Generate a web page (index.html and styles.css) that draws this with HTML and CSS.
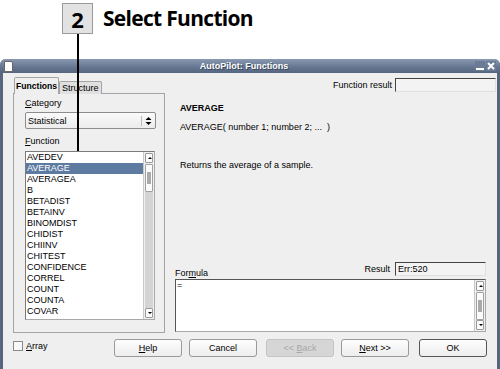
FILE: index.html
```html
<!DOCTYPE html>
<html lang="en">
<head>
  <meta charset="UTF-8">
  <title>AutoPilot: Functions</title>
  <link rel="stylesheet" href="styles.css">
</head>
<body>
  <div class="caption">
    <span class="step">2</span>
    <span class="caption-title">Select Function</span>
  </div>
  <div class="pointer"></div>

  <div class="window">
    <div class="titlebar">
      <span class="win-icon"></span>
      <span class="win-title">AutoPilot: Functions</span>
      <span class="win-buttons">
        <span class="win-btn"><span class="min-bar"></span></span>
        <span class="win-btn close">
          <svg width="10" height="10" viewBox="0 0 10 10"><path d="M2 2 L8 8 M8 2 L2 8" stroke="#fff" stroke-width="2"/></svg>
        </span>
      </span>
    </div>

    <div class="client">
      <div class="main">
        <div class="left">
          <div class="tabs">
            <span class="tab active">Functions</span>
            <span class="tab">Structure</span>
          </div>
          <div class="tab-panel">
            <div class="label"><u>C</u>ategory</div>
            <div class="select">
              <span>Statistical</span>
              <span class="spin">
                <svg width="7" height="10" viewBox="0 0 7 10"><path d="M3.5 1 L6.5 4 L0.5 4 Z M3.5 9 L6.5 6 L0.5 6 Z" fill="#000"/></svg>
              </span>
            </div>
            <div class="label fn-label"><u>F</u>unction</div>
            <div class="listbox">
              <ul class="items">
                <li>AVEDEV</li>
                <li class="selected">AVERAGE</li>
                <li>AVERAGEA</li>
                <li>B</li>
                <li>BETADIST</li>
                <li>BETAINV</li>
                <li>BINOMDIST</li>
                <li>CHIDIST</li>
                <li>CHIINV</li>
                <li>CHITEST</li>
                <li>CONFIDENCE</li>
                <li>CORREL</li>
                <li>COUNT</li>
                <li>COUNTA</li>
                <li>COVAR</li>
                <li>CRITBINOM</li>
              </ul>
              <div class="scrollbar">
                <span class="arrow up"></span>
                <span class="thumb"><span class="grip"></span></span>
                <span class="trough"></span>
                <span class="arrow down"></span>
              </div>
            </div>
          </div>
        </div>

        <div class="right">
          <div class="fn-result">
            <span>Function result</span>
            <span class="field wide"></span>
          </div>
          <div class="desc">
            <div class="desc-name">AVERAGE</div>
            <div class="desc-syntax">AVERAGE( number 1; number 2; ...&nbsp; )</div>
            <div class="desc-text">Returns the average of a sample.</div>
          </div>
          <div class="formula-head">
            <span>For<u>m</u>ula</span>
            <span class="result">
              <span>Result</span>
              <span class="field">Err:520</span>
            </span>
          </div>
          <div class="formula">
            <div class="formula-text">=</div>
            <div class="scrollbar small">
              <span class="arrow up"></span>
              <span class="thumb"><span class="grip"></span></span>
              <span class="trough"></span>
              <span class="arrow down"></span>
            </div>
          </div>
        </div>
      </div>

      <div class="footer">
        <label class="check"><span class="box"></span><span><u>A</u>rray</span></label>
        <div class="buttons">
          <span class="button"><u>H</u>elp</span>
          <span class="button">Cancel</span>
          <span class="button disabled">&lt;&lt; <u>B</u>ack</span>
          <span class="button"><u>N</u>ext &gt;&gt;</span>
          <span class="button default">OK</span>
        </div>
      </div>
    </div>
  </div>
</body>
</html>
```

FILE: styles.css
```css
body {
  margin: 0;
  width: 500px;
  height: 369px;
  background-color: white;
  font-family: "Liberation Sans", Arial, sans-serif;
  font-size: 9px;
  color: #000;
  position: relative;
  overflow: hidden;
}

u {
  text-decoration: underline;
  text-underline-offset: 1px;
}

/* caption above the screenshot */
.caption {
  height: 59px;
  display: flex;
  align-items: flex-start;
  padding-left: 62px;
  box-sizing: border-box;
  padding-top: 3px;
}

.step {
  width: 29px;
  height: 29px;
  border: 1px solid #9a9a9a;
  background-color: #e2e2e2;
  display: flex;
  align-items: center;
  justify-content: center;
  font-family: "Open Sans", sans-serif;
  font-weight: bold;
  font-size: 22px;
}

.caption-title {
  margin-left: 10px;
  margin-top: 1px;
  font-family: "Open Sans", sans-serif;
  font-weight: bold;
  font-size: 21px;
  line-height: 29px;
  letter-spacing: -0.7px;
}

.pointer {
  position: absolute;
  left: 77px;
  top: 34px;
  width: 2px;
  height: 117px;
  background-color: #000;
  z-index: 5;
}

/* window frame */
.window {
  border: 3px solid #56667f;
  border-top: none;
  border-radius: 6px 6px 3px 3px;
  background-color: #efefef;
  height: 310px;
}

.titlebar {
  height: 14px;
  margin: 0 -3px;
  border-radius: 6px 6px 0 0;
  background: linear-gradient(#8a99b1, #647590 60%, #56667f);
  display: flex;
  align-items: center;
  padding: 0 3px;
}

.win-icon {
  width: 7px;
  height: 9px;
  background-color: #fff;
  border: 1px solid #666;
  border-radius: 0 2px 0 0;
  margin-left: 1px;
}

.win-title {
  flex: 1;
  text-align: center;
  color: #fff;
  font-weight: bold;
  font-size: 9px;
  text-shadow: 1px 1px 0 #3a475a;
}

.win-buttons {
  display: flex;
  gap: 1px;
  margin-right: 1px;
}

.win-btn {
  width: 10px;
  height: 10px;
  display: flex;
  align-items: flex-end;
  justify-content: center;
  background-color: #6b7b95;
}

.min-bar {
  width: 8px;
  height: 2px;
  background-color: #fff;
  margin-bottom: 1px;
}

.client {
  padding: 5px 1px 0 10px;
}

.main {
  display: flex;
  height: 255px;
}

/* left column with tabs */
.left {
  width: 152px;
  padding-top: 1px;
  display: flex;
  flex-direction: column;
}

.tabs {
  display: flex;
  align-items: flex-end;
  height: 15px;
  padding-left: 1px;
  position: relative;
  z-index: 1;
}

.tab {
  height: 12px;
  line-height: 12px;
  padding: 0 2px;
  border: 1px solid #a4a4a4;
  border-bottom: none;
  border-radius: 2px 2px 0 0;
  background-color: #e0e0e0;
}

.tab.active {
  height: 16px;
  line-height: 16px;
  font-weight: bold;
  font-size: 8.6px;
  background-color: #efefef;
  padding: 0 1px;
}

.tab-panel {
  flex: 1;
  border: 1px solid #a4a4a4;
  margin-top: -1px;
  padding: 4px 0 0 11px;
}

.label {
  line-height: 11px;
}

.fn-label {
  margin-top: 7px;
}

.select {
  margin-top: 3px;
  width: 127px;
  height: 15px;
  border: 1px solid #8c8c8c;
  border-radius: 2px;
  background: linear-gradient(#fafafa, #ececec);
  display: flex;
  align-items: center;
  justify-content: space-between;
  padding-left: 2px;
}

.spin {
  border-left: 1px solid #bbb;
  height: 10px;
  padding: 0 3px;
  display: flex;
  align-items: center;
}

.listbox {
  margin-top: 4px;
  width: 128px;
  height: 167px;
  border: 1px solid #a9a9a9;
  border-top-color: #7a7a7a;
  border-left-color: #7a7a7a;
  background-color: #fff;
  display: flex;
  overflow: hidden;
}

.items {
  list-style: none;
  margin: 0;
  padding: 0;
  flex: 1;
  overflow: hidden;
}

.items li {
  height: 11px;
  line-height: 11px;
  padding-left: 1px;
  white-space: nowrap;
}

.items li.selected {
  background-color: #5d7aa0;
  color: #fff;
}

.scrollbar {
  width: 10px;
  border-left: 1px solid #c8c8c8;
  background-color: #efefef;
  display: flex;
  flex-direction: column;
  padding: 1px 0;
}

.arrow {
  height: 8px;
  margin: 0 1px;
  border: 1px solid #9a9a9a;
  border-radius: 1px;
  background-color: #fbfbfb;
  position: relative;
}

.arrow::after {
  content: "";
  position: absolute;
  left: 2px;
  top: 3px;
  border-left: 2px solid transparent;
  border-right: 2px solid transparent;
}

.arrow.up::after {
  border-bottom: 2px solid #000;
}

.arrow.down::after {
  border-top: 2px solid #000;
}

.thumb {
  height: 26px;
  margin: 1px 1px 0;
  border: 1px solid #a0a0a0;
  border-radius: 1px;
  background-color: #fbfbfb;
  display: flex;
  align-items: center;
  justify-content: center;
}

.grip {
  width: 4px;
  height: 12px;
  background-image: radial-gradient(#aaa 0.8px, transparent 0.9px);
  background-size: 2px 2px;
}

.trough {
  flex: 1;
  background-color: #d4d4d4;
  margin: 0 1px;
}

/* right column */
.right {
  flex: 1;
  margin-left: 10px;
  display: flex;
  flex-direction: column;
}

.fn-result {
  display: flex;
  justify-content: flex-end;
  align-items: center;
  gap: 3px;
  height: 14px;
}

.field {
  height: 12px;
  line-height: 12px;
  width: 87px;
  padding-left: 2px;
  border: 1px solid #e0e0e0;
  border-top-color: #444;
  border-left-color: #444;
  background-color: #f3f3f3;
}

.field.wide {
  width: 97px;
}

.desc {
  padding-left: 5px;
  height: 170px;
}

.desc-name {
  margin-top: 11px;
  line-height: 11px;
  font-weight: bold;
}

.desc-syntax {
  margin-top: 8px;
  line-height: 11px;
}

.desc-text {
  margin-top: 27px;
  line-height: 11px;
}

.formula-head {
  display: flex;
  justify-content: space-between;
  align-items: flex-end;
  margin-right: 10px;
}

.formula-head > span:first-child {
  margin-bottom: -2px;
}

.result {
  display: flex;
  align-items: center;
  gap: 5px;
}

.formula {
  margin-top: 3px;
  margin-right: 10px;
  height: 51px;
  border: 1px solid #a9a9a9;
  border-top-color: #555;
  border-left-color: #555;
  background-color: #fff;
  display: flex;
}

.formula-text {
  flex: 1;
  padding: 1px 0 0 1px;
  line-height: 9px;
}

/* bottom row */
.footer {
  display: flex;
  align-items: flex-start;
  margin-top: 6px;
}

.check {
  display: flex;
  align-items: center;
  gap: 3px;
  width: 101px;
  margin-top: 2px;
}

.check .box {
  width: 8px;
  height: 8px;
  border: 1px solid #8a8a8a;
  background-color: #f8f8f8;
}

.buttons {
  display: flex;
  gap: 7px;
}

.button {
  width: 66px;
  height: 16px;
  line-height: 16px;
  text-align: center;
  border: 1px solid #9a9a9a;
  border-radius: 3px;
  background: linear-gradient(#fdfdfd, #ededed);
}

.button.disabled {
  background: #d6d6d6;
  color: #a8a8a8;
  border-color: #c4c4c4;
  margin-left: 2px;
}

.button.default {
  border-color: #555;
  margin-left: 3px;
}
```
